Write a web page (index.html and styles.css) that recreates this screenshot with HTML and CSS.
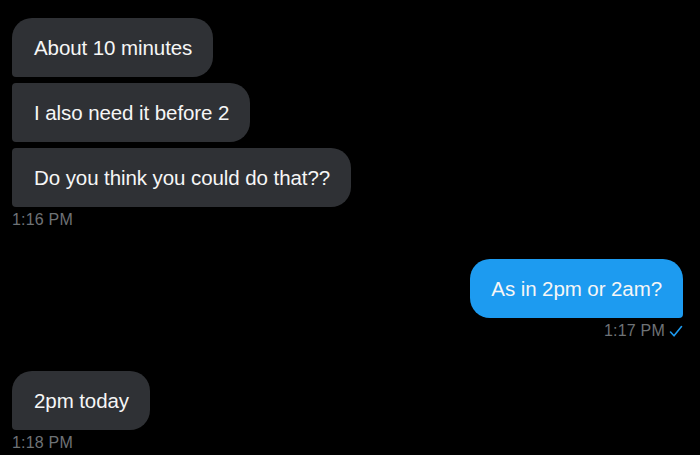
FILE: index.html
```html
<!DOCTYPE html>
<html>
<head>
<meta charset="utf-8">
<link rel="stylesheet" href="styles.css">
</head>
<body>
<div class="chat">
  <div class="group in">
    <div class="bubble first">About 10 minutes</div>
    <div class="bubble mid">I also need it before 2</div>
    <div class="bubble last">Do you think you could do that??</div>
    <div class="time">1:16 PM</div>
  </div>
  <div class="group out">
    <div class="bubble single">As in 2pm or 2am?</div>
    <div class="time">1:17 PM
      <svg class="check" width="14" height="13" viewBox="0 0 14 13"><path d="M1.5 7 L5 10.8 L12.5 1.5" fill="none" stroke="#1d9bf0" stroke-width="1.6" stroke-linecap="round" stroke-linejoin="round"/></svg>
    </div>
  </div>
  <div class="group in last-group">
    <div class="bubble single">2pm today</div>
    <div class="time">1:18 PM</div>
  </div>
</div>
</body>
</html>
```

FILE: styles.css
```css
html, body {
  margin: 0;
  padding: 0;
  background: #000;
}
body {
  width: 700px;
  height: 455px;
  overflow: hidden;
  font-family: "Liberation Sans", Arial, sans-serif;
}
.chat {
  display: flex;
  flex-direction: column;
  padding: 18px 17px 0 12px;
}
.group {
  display: flex;
  flex-direction: column;
  gap: 6px;
}
.group.in { align-items: flex-start; }
.group.out { align-items: flex-end; margin-top: 30px; }
.group.last-group { margin-top: 31px; }
.bubble {
  color: #f6f6f6;
  font-size: 20.5px;
  line-height: 21px;
  padding: 19px 21px 19px 22px;
  border-radius: 20px;
  letter-spacing: -0.08px;
}
.in .bubble { background: #2f3135; }
.out .bubble { background: #1d9bf0; padding: 19px 21px 19px 21px; }
.in .first { border-bottom-left-radius: 4px; }
.in .mid { border-radius: 4px 20px 20px 4px; }
.in .last { border-radius: 4px 20px 20px 4px; }
.in .single { border-bottom-left-radius: 4px; }
.out .single { border-bottom-right-radius: 4px; }
.time {
  color: #6e7276;
  font-size: 16px;
  line-height: 18px;
  margin-top: -2px;
  letter-spacing: 0.2px;
  display: flex;
  align-items: center;
  gap: 4px;
}
.check { display: block; margin-top: 1px; }
```
